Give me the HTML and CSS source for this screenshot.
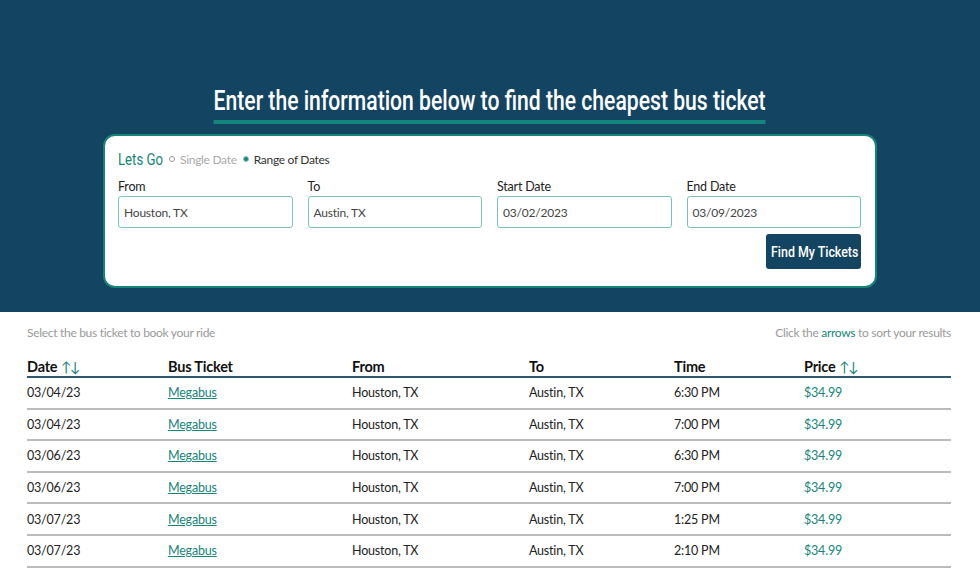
FILE: index.html
```html
<!DOCTYPE html>
<html>
<head>
<meta charset="utf-8">
<link rel="stylesheet" href="styles.css">
</head>
<body>
<header class="hero">
  <h1 class="hero-title">Enter the information below to find the cheapest bus ticket</h1>
  <form class="search-card">
    <div class="search-top">
      <span class="lets-go"><span class="narrow">Lets Go</span></span>
      <span class="radio-opt muted"><span class="radio"></span>Single Date</span>
      <span class="radio-opt"><span class="radio checked"></span>Range of Dates</span>
    </div>
    <div class="fields">
      <label class="field"><span class="field-label">From</span><span class="input">Houston, TX</span></label>
      <label class="field"><span class="field-label">To</span><span class="input">Austin, TX</span></label>
      <label class="field"><span class="field-label">Start Date</span><span class="input">03/02/2023</span></label>
      <label class="field"><span class="field-label">End Date</span><span class="input">03/09/2023</span></label>
    </div>
    <div class="actions"><button type="button" class="find-btn"><span class="narrow">Find My Tickets</span></button></div>
  </form>
</header>
<main class="results">
  <div class="results-hint">
    <span>Select the bus ticket to book your ride</span>
    <span>Click the <span class="accent">arrows</span> to sort your results</span>
  </div>
  <table class="tickets">
    <colgroup>
      <col class="c1"><col class="c2"><col class="c3"><col class="c4"><col class="c5"><col class="c6">
    </colgroup>
    <thead>
      <tr><th>Date <span class="sort">↑↓</span></th><th>Bus Ticket</th><th>From</th><th>To</th><th>Time</th><th>Price <span class="sort">↑↓</span></th></tr>
    </thead>
    <tbody>
      <tr><td>03/04/23</td><td><a href="#">Megabus</a></td><td>Houston, TX</td><td>Austin, TX</td><td>6:30 PM</td><td class="price">$34.99</td></tr>
      <tr><td>03/04/23</td><td><a href="#">Megabus</a></td><td>Houston, TX</td><td>Austin, TX</td><td>7:00 PM</td><td class="price">$34.99</td></tr>
      <tr><td>03/06/23</td><td><a href="#">Megabus</a></td><td>Houston, TX</td><td>Austin, TX</td><td>6:30 PM</td><td class="price">$34.99</td></tr>
      <tr><td>03/06/23</td><td><a href="#">Megabus</a></td><td>Houston, TX</td><td>Austin, TX</td><td>7:00 PM</td><td class="price">$34.99</td></tr>
      <tr><td>03/07/23</td><td><a href="#">Megabus</a></td><td>Houston, TX</td><td>Austin, TX</td><td>1:25 PM</td><td class="price">$34.99</td></tr>
      <tr><td>03/07/23</td><td><a href="#">Megabus</a></td><td>Houston, TX</td><td>Austin, TX</td><td>2:10 PM</td><td class="price">$34.99</td></tr>
    </tbody>
  </table>
</main>
</body>
</html>
```

FILE: styles.css
```css
* { box-sizing: border-box; }
body {
  margin: 0;
  font-family: "Lato", "Liberation Sans", sans-serif;
  color: #222;
  background: #fff;
}
.hero {
  background: #134563;
  height: 312px;
  padding-top: 84px;
  display: flex;
  flex-direction: column;
  align-items: center;
}
.hero-title {
  margin: 0;
  font-family: "Roboto", sans-serif;
  font-weight: 500;
  font-size: 28px;
  line-height: 34px;
  white-space: nowrap;
  color: #fff;
  border-bottom: 4px solid #14877c;
  padding-bottom: 2px;
  transform: scaleX(0.755);
}
.search-card {
  margin-top: 10px;
  width: 774px;
  height: 154px;
  background: #fff;
  border: 2px solid #15857a;
  border-radius: 12px;
  padding: 12px 14px 0 13px;
}
.search-top {
  display: flex;
  align-items: center;
  gap: 6px;
  height: 22px;
}
.narrow {
  display: inline-block;
  white-space: nowrap;
  transform: scaleX(0.8);
  transform-origin: left center;
}
.lets-go {
  display: inline-block;
  width: 44px;
  font-family: "Roboto", sans-serif;
  font-size: 16.5px;
  color: #15857a;
  margin-right: 1px;
}
.radio-opt {
  display: flex;
  align-items: center;
  gap: 5px;
  font-size: 12px;
  letter-spacing: -0.3px;
  color: #333;
}
.radio-opt.muted { color: #aaa; }
.radio {
  width: 6px; height: 6px;
  border-radius: 50%;
  border: 1px solid #999;
}
.radio.checked { background: #15857a; border-color: #8cc7c1; }
.fields {
  margin-top: 9px;
  display: grid;
  grid-template-columns: repeat(4, 1fr);
  gap: 15px;
}
.field { display: flex; flex-direction: column; }
.field-label { font-size: 12.5px; color: #222; line-height: 16px; height: 17px; letter-spacing: -0.2px; }
.input {
  height: 32px;
  border: 1.5px solid #78c2bb;
  border-radius: 3px;
  padding: 0 5px;
  display: flex;
  align-items: center;
  font-size: 12px;
  letter-spacing: -0.2px;
  color: #444;
}
.actions { display: flex; justify-content: flex-end; margin-top: 6px; }
.find-btn {
  background: #134563;
  color: #fff;
  border: 0;
  border-radius: 3px;
  height: 35px;
  width: 95px;
  padding: 0 0 0 5px;
  text-align: left;
  font-family: "Roboto", sans-serif;
  font-weight: 500;
  font-size: 15.5px;
}
.results { padding: 14px 29px 0 27px; }
.results-hint {
  display: flex;
  justify-content: space-between;
  font-size: 12px;
  letter-spacing: -0.3px;
  color: #999;
  line-height: 14px;
}
.accent { color: #15857a; }
.tickets {
  margin-top: 15px;
  width: 100%;
  border-collapse: collapse;
  font-size: 12.5px;
  letter-spacing: -0.2px;
}
.c1 { width: 141px; } .c2 { width: 184px; } .c3 { width: 177px; }
.c4 { width: 145px; } .c5 { width: 130px; }
.tickets th {
  text-align: left;
  vertical-align: bottom;
  font-weight: 700;
  font-size: 14.5px;
  color: #111;
  padding: 0 0 1px;
  height: 22px;
  border-bottom: 2px solid #2d5970;
}
.sort { color: #15857a; font-weight: 400; font-size: 14px; letter-spacing: -1.5px; }
.tickets td {
  height: 31.6px;
  border-bottom: 2px solid #bbb;
  padding: 0;
  color: #222;
}
.tickets a { color: #15857a; }
.tickets td.price { color: #15857a; }
```
